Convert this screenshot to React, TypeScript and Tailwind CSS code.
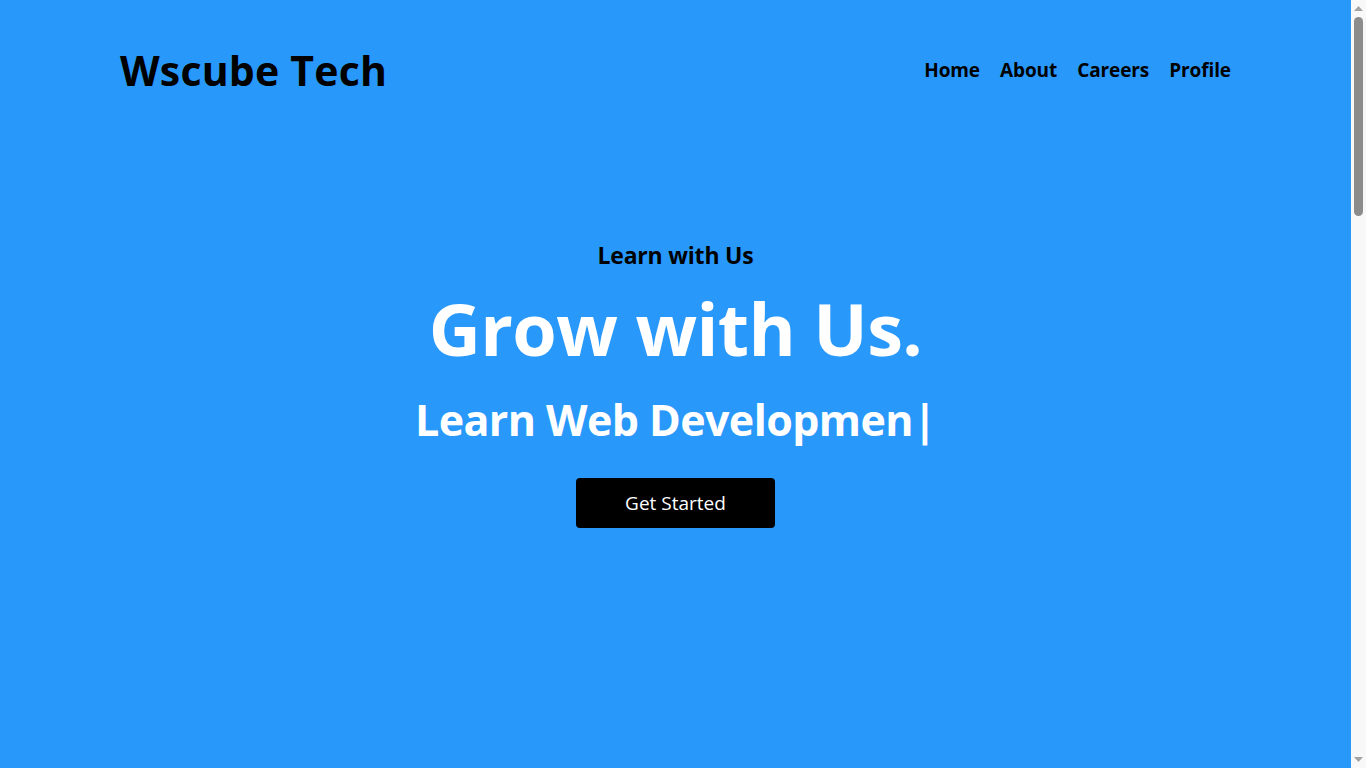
export default function App() {
  const font = { fontFamily: '"Open Sans", "Noto Sans", sans-serif' };
  return (
    <div className="flex h-[768px] w-full overflow-hidden" style={font}>
      <main className="flex-1 bg-[#2898fb]">
        <header className="mx-auto flex max-w-[1141px] items-center justify-between px-[15px] pt-[44px]">
          <h1 className="text-[41px] font-bold leading-[52px] tracking-[0.2px] text-black">Wscube Tech</h1>
          <nav className="flex items-center gap-[20px]">
            {['Home', 'About', 'Careers', 'Profile'].map((n) => (
              <a key={n} href="#" className="text-[19px] font-bold tracking-[-0.1px] text-black">
                {n}
              </a>
            ))}
          </nav>
        </header>
        <section className="flex flex-col items-center pt-[143px] text-center">
          <h3 className="text-[23px] font-bold leading-[32px] tracking-[-0.2px] text-black">Learn with Us</h3>
          <h2 className="mt-[12px] text-[72px] font-bold leading-[90px] tracking-[-0.6px] text-white">Grow with Us.</h2>
          <h2 className="mt-[17px] text-[43px] font-bold leading-[60px] tracking-[-0.6px] text-white">Learn Web Developmen|</h2>
          <button className="mt-[28px] h-[50px] w-[199px] rounded-[4px] bg-black text-[19px] text-white">
            Get Started
          </button>
        </section>
      </main>
      <aside className="flex w-[15px] flex-col items-center bg-[#f8f8f8]">
        <svg width="9" height="6" viewBox="0 0 9 6" className="mt-[6px]">
          <path d="M4.5 0 L9 5 L0 5 Z" fill="#a3a3a3" />
        </svg>
        <div className="mt-[5px] h-[199px] w-[9px] rounded-full bg-[#8c8c8c]" />
        <div className="flex-1" />
        <svg width="9" height="6" viewBox="0 0 9 6" className="mb-[5px]">
          <path d="M0 0 L9 0 L4.5 5 Z" fill="#a3a3a3" />
        </svg>
      </aside>
    </div>
  );
}
